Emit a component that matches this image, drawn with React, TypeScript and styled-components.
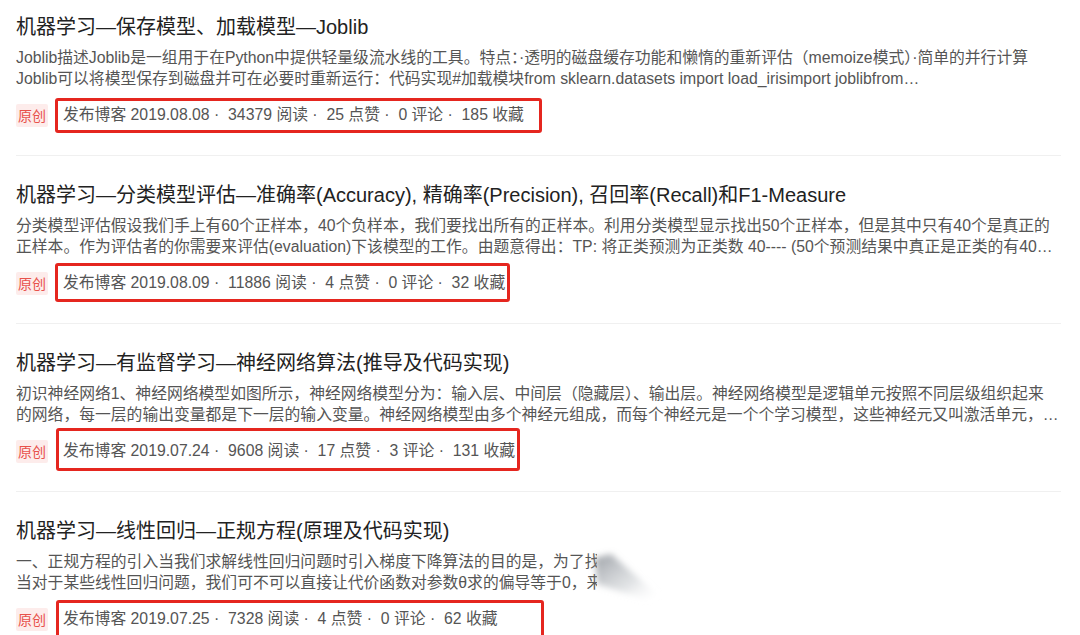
import React from "react";
import styled, { createGlobalStyle } from "styled-components";

const Global = createGlobalStyle`
  html, body { margin: 0; padding: 0; background: #fff; }
  body {
    font-family: "Liberation Sans", "Noto Sans CJK SC", sans-serif;
    overflow: hidden;
  }
`;

const List = styled.div`
  padding: 0 19px 0 16px;
`;

const Item = styled.article`
  position: relative;
  padding: 25px 0 28px;
  border-bottom: 1px solid #f0f0f0;
  &:first-child { padding-top: 13px; }
`;

const Title = styled.h4`
  margin: 0 0 6px;
  font-size: 20px;
  line-height: 28px;
  font-weight: normal;
  color: #222;
  white-space: nowrap;
`;

const Desc = styled.div`
  font-size: 15.8px;
  line-height: 21px;
  color: #555;
`;

const DescLine = styled.div`
  white-space: nowrap;
  overflow: hidden;
`;

const Meta = styled.div`
  margin-top: 14px;
  height: 24px;
  display: flex;
  align-items: center;
  gap: 15px;
`;

const Badge = styled.span`
  width: 32px;
  height: 23px;
  display: inline-flex;
  align-items: center;
  justify-content: center;
  border-radius: 2px;
  background: #fdeceb;
  color: #e8524b;
  font-size: 14px;
`;

type Box = { t: number; b: number; l: number; r: number };

const MetaText = styled.span<{ $box: Box }>`
  position: relative;
  font-size: 15.8px;
  line-height: 24px;
  color: #555;
  white-space: pre;
  &::after {
    content: "";
    position: absolute;
    top: ${(p) => p.$box.t}px;
    bottom: ${(p) => p.$box.b}px;
    left: ${(p) => p.$box.l}px;
    right: ${(p) => p.$box.r}px;
    border: 3px solid #e5261f;
    border-radius: 3px;
    pointer-events: none;
  }
`;

const Curl = styled.div`
  position: absolute;
  left: 581px;
  top: 56px;
  right: -19px;
  bottom: -10px;
  background: #fff;
`;

const CurlArt = styled.svg`
  position: absolute;
  left: -8px;
  top: -4px;
  width: 120px;
  height: 100px;
  overflow: visible;
`;

type Post = {
  title: string;
  lines: string[];
  date: string;
  read: string;
  like: string;
  comment: string;
  fav: string;
  box: Box;
  curl?: boolean;
};

const posts: Post[] = [
  {
    title: "机器学习—保存模型、加载模型—Joblib",
    lines: [
      "Joblib描述Joblib是一组用于在Python中提供轻量级流水线的工具。特点：·透明的磁盘缓存功能和懒惰的重新评估（memoize模式）·简单的并行计算",
      "Joblib可以将模型保存到磁盘并可在必要时重新运行：代码实现#加载模块from sklearn.datasets import load_irisimport joblibfrom…",
    ],
    date: "2019.08.08",
    read: "34379",
    like: "25",
    comment: "0",
    fav: "185",
    box: { t: -5, b: -6, l: -8, r: -18 },
  },
  {
    title:
      "机器学习—分类模型评估—准确率(Accuracy), 精确率(Precision), 召回率(Recall)和F1-Measure",
    lines: [
      "分类模型评估假设我们手上有60个正样本，40个负样本，我们要找出所有的正样本。利用分类模型显示找出50个正样本，但是其中只有40个是真正的",
      "正样本。作为评估者的你需要来评估(evaluation)下该模型的工作。由题意得出：TP: 将正类预测为正类数 40---- (50个预测结果中真正是正类的有40…",
    ],
    date: "2019.08.09",
    read: "11886",
    like: "4",
    comment: "0",
    fav: "32",
    box: { t: -8, b: -7, l: -8, r: -5 },
  },
  {
    title: "机器学习—有监督学习—神经网络算法(推导及代码实现)",
    lines: [
      "初识神经网络1、神经网络模型如图所示，神经网络模型分为：输入层、中间层（隐藏层）、输出层。神经网络模型是逻辑单元按照不同层级组织起来",
      "的网络，每一层的输出变量都是下一层的输入变量。神经网络模型由多个神经元组成，而每个神经元是一个个学习模型，这些神经元又叫激活单元，…",
    ],
    date: "2019.07.24",
    read: "9608",
    like: "17",
    comment: "3",
    fav: "131",
    box: { t: -11, b: -8, l: -7, r: -5 },
  },
  {
    title: "机器学习—线性回归—正规方程(原理及代码实现)",
    lines: [
      "一、正规方程的引入当我们求解线性回归问题时引入梯度下降算法的目的是，为了找到代价函数的最小值",
      "当对于某些线性回归问题，我们可不可以直接让代价函数对参数θ求的偏导等于0，来求得最优参数",
    ],
    date: "2019.07.25",
    read: "7328",
    like: "4",
    comment: "0",
    fav: "62",
    box: { t: -7, b: -30, l: -7, r: -46 },
    curl: true,
  },
];

const sep = " ·  ";

export default function App() {
  return (
    <>
      <Global />
      <List>
        {posts.map((p, i) => (
          <Item key={i}>
            <Title>{p.title}</Title>
            <Desc>
              {p.lines.map((l, j) => (
                <DescLine key={j}>{l}</DescLine>
              ))}
            </Desc>
            <Meta>
              <Badge>原创</Badge>
              <MetaText $box={p.box}>
                {`发布博客 ${p.date}${sep}${p.read} 阅读${sep}${p.like} 点赞${sep}${p.comment} 评论${sep}${p.fav} 收藏`}
              </MetaText>
            </Meta>
            {p.curl && (
              <Curl>
                <CurlArt viewBox="0 0 120 100">
                  <defs>
                    <filter id="blur" x="-50%" y="-50%" width="200%" height="200%">
                      <feGaussianBlur stdDeviation="3" />
                    </filter>
                    <linearGradient id="shade" x1="0" y1="0" x2="1" y2="1">
                      <stop offset="0" stopColor="#8a8f96" stopOpacity="0.85" />
                      <stop offset="0.6" stopColor="#c4c8cc" stopOpacity="0.5" />
                      <stop offset="1" stopColor="#ffffff" stopOpacity="0" />
                    </linearGradient>
                  </defs>
                  <polygon
                    points="6,14 22,10 70,52 58,56 8,40"
                    fill="url(#shade)"
                    filter="url(#blur)"
                  />
                </CurlArt>
              </Curl>
            )}
          </Item>
        ))}
      </List>
    </>
  );
}
